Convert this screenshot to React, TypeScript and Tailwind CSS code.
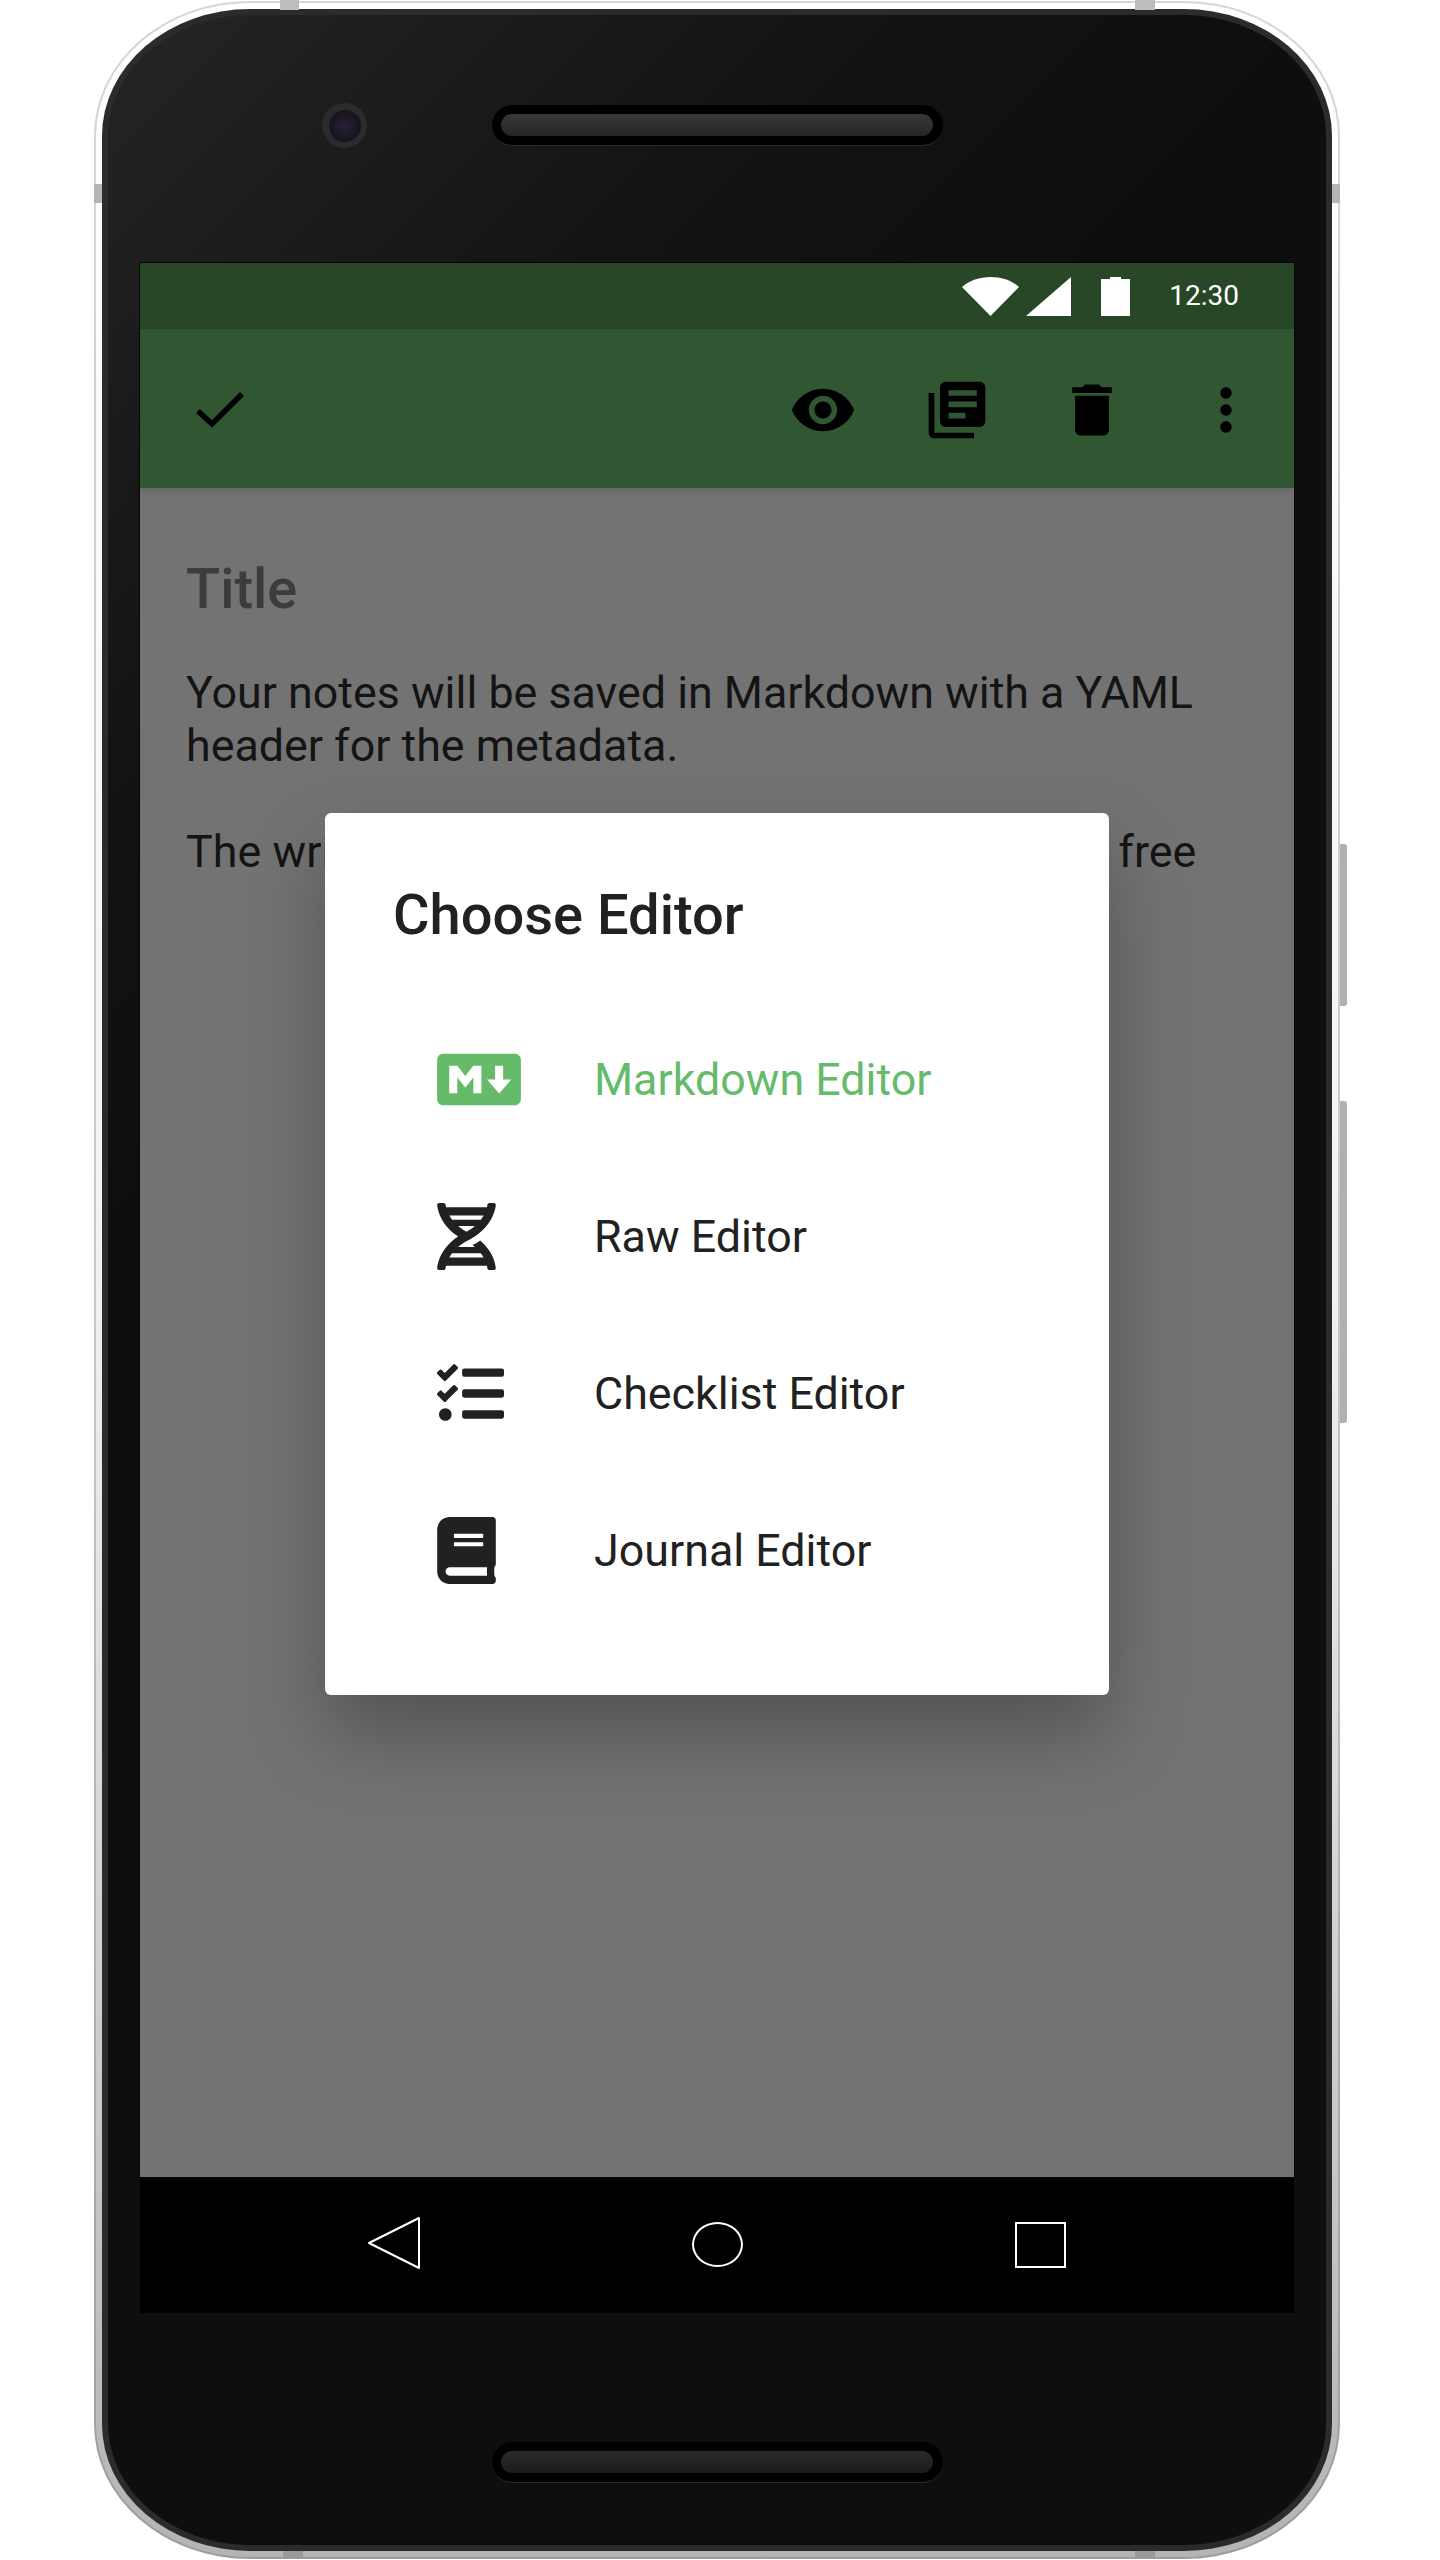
import { FaBook, FaDna, FaMarkdown, FaTasks } from "react-icons/fa";

const roboto = "font-['Roboto',sans-serif]";

const EyeIcon = () => (
  <svg viewBox="0 0 24 24" className="w-[68px] h-[68px]" fill="#000">
    <path d="M12 4.5C7 4.5 2.73 7.61 1 12c1.73 4.39 6 7.5 11 7.5s9.27-3.11 11-7.5c-1.73-4.39-6-7.5-11-7.5zM12 17c-2.76 0-5-2.24-5-5s2.24-5 5-5 5 2.24 5 5-2.24 5-5 5zm0-8c-1.66 0-3 1.34-3 3s1.34 3 3 3 3-1.34 3-3-1.34-3-3-3z" />
  </svg>
);

const LibraryIcon = () => (
  <svg viewBox="0 0 24 24" className="w-[68px] h-[68px]" fill="#000">
    <path d="M4 6H2v14c0 1.1.9 2 2 2h14v-2H4V6zm16-4H8c-1.1 0-2 .9-2 2v12c0 1.1.9 2 2 2h12c1.1 0 2-.9 2-2V4c0-1.1-.9-2-2-2zm-1 9H9V9h10v2zm-4 4H9v-2h6v2zm4-8H9V5h10v2z" />
  </svg>
);

const TrashIcon = () => (
  <svg viewBox="0 0 24 24" className="w-[68px] h-[68px]" fill="#000">
    <path d="M6 19c0 1.1.9 2 2 2h8c1.1 0 2-.9 2-2V7H6v12zM19 4h-3.5l-1-1h-5l-1 1H5v2h14V4z" />
  </svg>
);

const MoreIcon = () => (
  <svg viewBox="0 0 24 24" className="w-[68px] h-[68px]" fill="#000">
    <path d="M12 8c1.1 0 2-.9 2-2s-.9-2-2-2-2 .9-2 2 .9 2 2 2zm0 2c-1.1 0-2 .9-2 2s.9 2 2 2 2-.9 2-2-.9-2-2-2zm0 6c-1.1 0-2 .9-2 2s.9 2 2 2 2-.9 2-2-.9-2-2-2z" />
  </svg>
);

const editors = [
  { label: "Markdown Editor", icon: <FaMarkdown className="w-[84px] h-[67px] text-[#66bb6a]" />, color: "text-[#66bb6a]" },
  { label: "Raw Editor", icon: <FaDna className="w-[59px] h-[67px] text-[#212121]" />, color: "text-[#212121]" },
  { label: "Checklist Editor", icon: <FaTasks className="w-[67px] h-[67px] text-[#212121]" />, color: "text-[#212121]" },
  { label: "Journal Editor", icon: <FaBook className="w-[59px] h-[67px] text-[#212121]" />, color: "text-[#212121]" },
];

const Speaker = ({ top }: { top: string }) => (
  <div className="w-[451px] h-[41px] rounded-full bg-black border-b border-[#2a2a2a] flex items-center justify-center">
    <div className={`w-[432px] h-[22px] rounded-full ${top}`} />
  </div>
);

const App = () => {
  return (
    <div className={`${roboto} w-[1440px] h-[2560px] bg-white relative overflow-hidden`}>
      {/*side buttons*/}
      <div className="absolute left-[1335px] top-[844px] w-[12px] h-[162px] bg-[#b0b0b0] rounded-r-[3px]" />
      <div className="absolute left-[1335px] top-[1101px] w-[12px] h-[322px] bg-[#b0b0b0] rounded-r-[3px]" />

      {/*silver frame*/}
      <div className="absolute left-[94px] top-[1px] w-[1246px] h-[2558px] rounded-[156px/135px] bg-gradient-to-b from-[#d6d6d6] via-[#c8c8c8] to-[#9c9c9c] p-[2px]">
        <div className="w-full h-full rounded-[154px/133px] bg-gradient-to-b from-white via-[#f2f2f2] to-[#b4b4b4] p-[6px]">
          <div className="w-full h-full rounded-[148px/127px] bg-[#2b2b2b] p-[6px]">
            {/*body*/}
            <div className="w-full h-full rounded-[142px/121px] bg-[linear-gradient(135deg,#252525_0%,#131313_20%,#0e0e0e_33%,#0e0e0e_100%)] flex flex-col px-[32px]">
              {/*top bezel*/}
              <div className="h-[248px] shrink-0 relative flex items-center justify-center pb-[27px]">
                <div className="absolute left-[182px] top-[88px] w-[45px] h-[45px] rounded-full bg-[#2b2b2d] flex items-center justify-center">
                  <div className="w-[32px] h-[32px] rounded-full bg-[radial-gradient(circle,#2a2038_0%,#15131c_70%)]" />
                </div>
                <Speaker top="bg-gradient-to-b from-[#383838] to-[#262626]" />
              </div>

              {/*screen*/}
              <div className="h-[1914px] shrink-0 flex flex-col relative shadow-[0_0_0_1px_#050505]">
                <div className="h-[66px] bg-[#284727] flex items-center justify-end pr-[55px] text-white shrink-0">
                  <svg viewBox="0 0 57 39" className="w-[57px] h-[39px] mr-[7px]">
                    <path d="M0 10C7 3.500 18 0 28.500 0S50 3.500 57 10L28.500 39z" fill="#fff" />
                  </svg>
                  <svg viewBox="0 0 45 39" className="w-[45px] h-[39px] mr-[30px]">
                    <path d="M45 0v39H0z" fill="#fff" />
                  </svg>
                  <svg viewBox="0 0 29 39" className="w-[29px] h-[39px] mr-[39px]">
                    <path d="M9 0h11v2h9v37H0V2h9z" fill="#fff" />
                  </svg>
                  <span className="text-[28px] leading-none">12:30</span>
                </div>

                <div className="h-[159px] bg-[#305732] shrink-0 flex items-center pl-[56px] pr-[34px] pt-[2px] relative shadow-[0_2px_6px_rgba(0,0,0,0.15)]">
                  <svg viewBox="0 0 48 36" className="w-[48px] h-[36px]">
                    <path d="M2 19l14 13L46 2" fill="none" stroke="#000" strokeWidth="5.500" />
                  </svg>
                  <div className="ml-auto flex items-center gap-[66.5px]">
                    <EyeIcon />
                    <LibraryIcon />
                    <TrashIcon />
                    <MoreIcon />
                  </div>
                </div>

                <div className="flex-1 bg-[#737373] px-[46px] pt-[68px]">
                  <h1 className="text-[56px] leading-[66px] font-medium text-[#3c3c3c]">Title</h1>
                  <p className="mt-[44px] text-[44.8px] leading-[53px] text-[#141414]">
                    Your notes will be saved in Markdown with a YAML header for the metadata.
                  </p>
                  <p className="mt-[53px] text-[44.8px] leading-[53px] text-[#141414] whitespace-nowrap tracking-[0.06px]">
                    The writing experience is genuinely distraction free
                  </p>
                </div>

                {/*dialog*/}
                <div className="absolute left-[185px] top-[550px] w-[784px] h-[882px] bg-white rounded-[6px] shadow-[0_40px_80px_rgba(0,0,0,0.28)] flex flex-col pl-[68px] pt-[69px]">
                  <h2 className="text-[56px] leading-[66px] font-medium text-[#212121]">Choose Editor</h2>
                  <div className="mt-[53px] flex flex-col">
                    {editors.map((editor) => (
                      <div key={editor.label} className="h-[157px] flex items-center pl-[44px]">
                        <div className="w-[157px] shrink-0 flex items-center">{editor.icon}</div>
                        <span className={`text-[44.8px] ${editor.color}`}>{editor.label}</span>
                      </div>
                    ))}
                  </div>
                </div>
              </div>

              {/*nav bar*/}
              <div className="h-[136px] shrink-0 bg-black flex items-start pl-[227px] pt-[39px]">
                <svg viewBox="0 0 54 54" className="w-[54px] h-[54px]">
                  <path d="M52 2v50L2 27z" fill="none" stroke="#fff" strokeWidth="2" strokeLinejoin="round" />
                </svg>
                <div className="ml-[271px] mt-[6px] w-[51px] h-[45px] rounded-[50%] border-2 border-white" />
                <div className="ml-[272px] mt-[6px] w-[51px] h-[46px] border-2 border-white" />
              </div>

              {/*bottom bezel*/}
              <div className="flex-1 flex items-center justify-center pt-[66px]">
                <Speaker top="bg-gradient-to-b from-[#2a2a2a] to-[#1c1c1c]" />
              </div>
            </div>
          </div>
        </div>
      </div>

      {/*antenna bands*/}
      <div className="absolute left-[280px] top-0 w-[19px] h-[10px] bg-[#bdbdbd]" />
      <div className="absolute left-[1135px] top-0 w-[20px] h-[10px] bg-[#bdbdbd]" />
      <div className="absolute left-[94px] top-[184px] w-[8px] h-[19px] bg-[#b5b5b5]" />
      <div className="absolute left-[1332px] top-[184px] w-[8px] h-[19px] bg-[#b5b5b5]" />
      <div className="absolute left-[283px] top-[2551px] w-[20px] h-[8px] bg-[#999999]" />
      <div className="absolute left-[1135px] top-[2551px] w-[20px] h-[8px] bg-[#999999]" />
    </div>
  );
};

export default App;
